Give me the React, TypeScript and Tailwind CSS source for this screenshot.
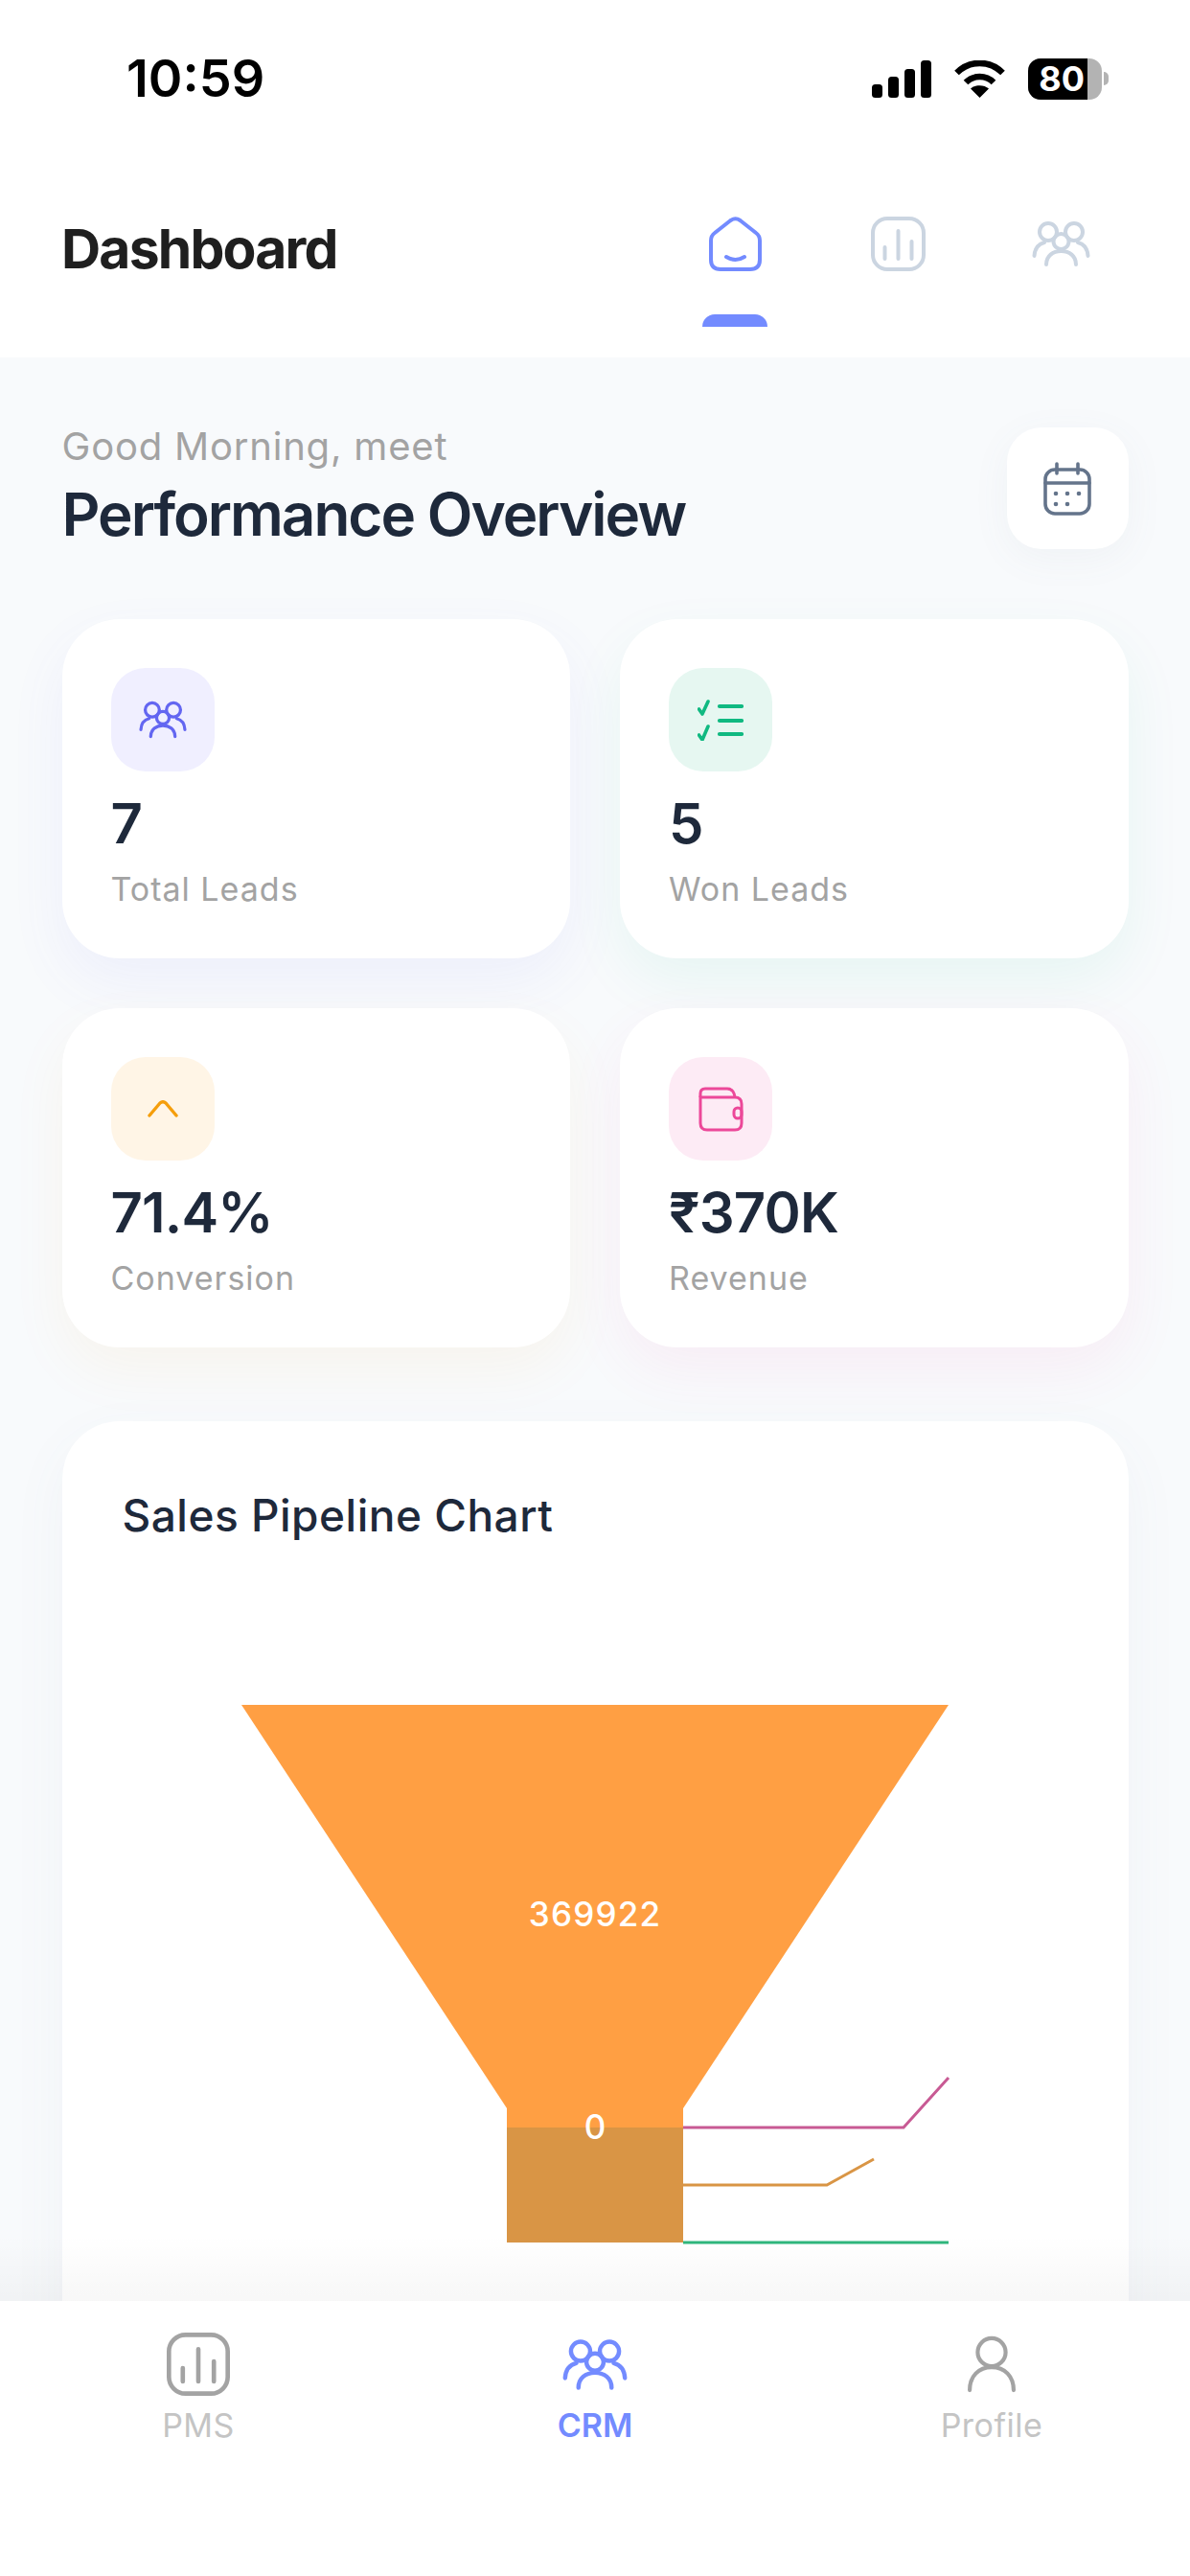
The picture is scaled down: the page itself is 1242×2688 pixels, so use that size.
import type { ReactNode } from "react"

const FONT = "font-['Inter','Noto_Sans',sans-serif]"

function PeopleIcon({ className }: { className?: string }) {
  return (
    <svg viewBox="0 0 61 47" fill="none" stroke="currentColor" strokeWidth="4" strokeLinecap="round" className={className}>
      <circle cx="17" cy="11" r="9" />
      <circle cx="44" cy="11" r="9" />
      <circle cx="30.5" cy="21" r="8" />
      <path d="M2.5 36C3 28 7 23.5 13 22" />
      <path d="M58.5 36C58 28 54 23.5 48 22" />
      <path d="M15 45C15 36 22 31 30.5 31C39 31 46 36 46 45" />
    </svg>
  )
}

function ChartIcon({ className }: { className?: string }) {
  return (
    <svg viewBox="0 0 57 57" fill="none" stroke="currentColor" strokeWidth="4" strokeLinecap="round" className={className}>
      <rect x="2" y="2" width="53" height="53" rx="15" />
      <path d="M14.5 32V44M28.5 15V44M42.5 26V44" />
    </svg>
  )
}

function HomeIcon({ className }: { className?: string }) {
  return (
    <svg viewBox="0 0 55 57" fill="none" stroke="currentColor" strokeWidth="4" strokeLinecap="round" strokeLinejoin="round" className={className}>
      <path d="M22.5 4L6 17Q2 20 2 25V45Q2 55 12 55H43Q53 55 53 45V25Q53 20 49 17L32.5 4Q27.5 0.5 22.5 4Z" />
      <path d="M18 42Q27.5 48 37 42" />
    </svg>
  )
}

function CalendarIcon({ className }: { className?: string }) {
  return (
    <svg viewBox="0 0 50 56" fill="none" stroke="currentColor" strokeWidth="3.6" strokeLinecap="round" className={className}>
      <rect x="2" y="8" width="46" height="46" rx="10" />
      <path d="M2 22H48M14 2V12M36 2V12" />
      <g fill="currentColor" stroke="none">
        <circle cx="13" cy="33" r="2.3" />
        <circle cx="25" cy="33" r="2.3" />
        <circle cx="37" cy="33" r="2.3" />
        <circle cx="13" cy="44" r="2.3" />
        <circle cx="25" cy="44" r="2.3" />
      </g>
    </svg>
  )
}

function ChecklistIcon({ className }: { className?: string }) {
  return (
    <svg viewBox="0 0 48 43" fill="none" stroke="currentColor" strokeLinecap="round" strokeLinejoin="round" className={className}>
      <path d="M1.5 10L5 15L11 2M1.5 37L5 42L11 28" strokeWidth="3.6" />
      <path d="M23 7H46M23 22H46M23 36H46" strokeWidth="4.2" />
    </svg>
  )
}

function WalletIcon({ className }: { className?: string }) {
  return (
    <svg viewBox="0 0 47 47" fill="none" stroke="currentColor" strokeWidth="3" className={className}>
      <path d="M2 11V38Q2 45 9 45H38Q45 45 45 38V18Q45 11 38 11H2Z" />
      <path d="M2 11V7Q2 2 7 2H30Q37 2 38 11" />
      <rect x="37" y="22" width="8" height="11" rx="4" />
    </svg>
  )
}

function ChevronIcon({ className }: { className?: string }) {
  return (
    <svg viewBox="0 0 32 18" fill="none" stroke="currentColor" strokeWidth="3.4" strokeLinecap="round" strokeLinejoin="round" className={className}>
      <path d="M2 16L13 3Q16 0.5 19 3L30 16" />
    </svg>
  )
}

function ProfileIcon({ className }: { className?: string }) {
  return (
    <svg viewBox="0 0 48 56" fill="none" stroke="currentColor" strokeWidth="4" strokeLinecap="round" className={className}>
      <circle cx="24" cy="16" r="14" />
      <path d="M2 54C2 40 11 31 24 31C37 31 46 40 46 54" />
    </svg>
  )
}

function StatusBar() {
  return (
    <div className="h-[164px] shrink-0 bg-white flex items-center justify-between pl-[132px] pr-[85px]">
      <span className="text-[54px] leading-none font-semibold text-black">10:59</span>
      <div className="flex items-center gap-[24px]">
        <svg viewBox="0 0 62 39" className="w-[62px] h-[39px]" fill="black">
          <rect x="0" y="25" width="11" height="14" rx="3.5" />
          <rect x="17" y="17" width="11" height="22" rx="3.5" />
          <rect x="34" y="9" width="11" height="30" rx="3.5" />
          <rect x="51" y="0" width="11" height="39" rx="3.5" />
        </svg>
        <svg viewBox="0 0 53 39" className="w-[53px] h-[39px]" fill="none" stroke="black" strokeWidth="6.5">
          <path d="M2.5 13C16 -0.5 37 -0.5 50.5 13" />
          <path d="M12 23C20 15 33 15 41 23" />
          <path d="M26.5 39L17 29.5C22 25 31 25 36 29.5Z" fill="black" stroke="none" />
        </svg>
        <div className="flex items-center">
          <div className="w-[77px] h-[43px] rounded-[13px] overflow-hidden flex bg-[#b3b3b3]">
            <div className="w-[62px] bg-black flex items-center justify-end pr-[3px] text-white text-[36px] font-bold leading-none">
              80
            </div>
          </div>
          <div className="w-[5px] h-[14px] ml-[2px] rounded-r-full bg-[#b3b3b3]" />
        </div>
      </div>
    </div>
  )
}

function HeaderTab({ active, children }: { active?: boolean; children: ReactNode }) {
  return (
    <div className="w-[170px] flex flex-col items-center">
      <div className="h-[57px] flex items-center justify-center">{children}</div>
      <div className={`mt-[45px] w-[68px] h-[13px] rounded-t-[14px] ${active ? "bg-[#738bff]" : "bg-transparent"}`} />
    </div>
  )
}

function Header() {
  return (
    <header className="h-[209px] shrink-0 bg-white flex justify-between pl-[64px] pr-[50px] pt-[64px]">
      <h1 className="text-[57px] leading-[64px] font-bold tracking-[-1.8px] text-[#1f1f1f]">Dashboard</h1>
      <div className="flex -mt-[2px]">
        <HeaderTab active>
          <HomeIcon className="w-[55px] h-[57px] text-[#738bff]" />
        </HeaderTab>
        <HeaderTab>
          <ChartIcon className="w-[57px] h-[57px] text-[#cbd5e1]" />
        </HeaderTab>
        <HeaderTab>
          <PeopleIcon className="w-[61px] h-[47px] text-[#cbd5e1]" />
        </HeaderTab>
      </div>
    </header>
  )
}

const stats = [
  {
    value: "7",
    label: "Total Leads",
    tile: "bg-[#f0efff]",
    shadow: "shadow-[0_24px_60px_rgba(99,102,241,0.07)]",
    icon: <PeopleIcon className="w-[50px] h-[40px] text-[#6366f1]" />,
  },
  {
    value: "5",
    label: "Won Leads",
    tile: "bg-[#e6f7f1]",
    shadow: "shadow-[0_24px_60px_rgba(16,185,129,0.07)]",
    icon: <ChecklistIcon className="w-[48px] h-[43px] text-[#10b981]" />,
  },
  {
    value: "71.4%",
    label: "Conversion",
    tile: "bg-[#fff5e6]",
    shadow: "shadow-[0_24px_60px_rgba(245,158,11,0.06)]",
    icon: <ChevronIcon className="w-[32px] h-[18px] text-[#f59e0b]" />,
  },
  {
    value: "₹370K",
    label: "Revenue",
    tile: "bg-[#fdebf5]",
    shadow: "shadow-[0_24px_60px_rgba(236,72,153,0.07)]",
    icon: <WalletIcon className="w-[47px] h-[47px] text-[#ec4899]" />,
  },
]

function StatCard({ stat }: { stat: (typeof stats)[number] }) {
  return (
    <div className={`h-[354px] rounded-[60px] bg-white pl-[51px] pt-[51px] ${stat.shadow}`}>
      <div className={`w-[108px] h-[108px] rounded-[36px] flex items-center justify-center ${stat.tile}`}>{stat.icon}</div>
      <div className="mt-[18px] text-[58px] leading-[72px] font-semibold tracking-[-0.8px] text-[#1e293b]">{stat.value}</div>
      <div className="mt-[11px] text-[34px] leading-[44px] tracking-[1px] text-[#a3a3a3]">{stat.label}</div>
    </div>
  )
}

function FunnelChart() {
  return (
    <svg viewBox="0 0 1113 900" className="w-full h-[900px] mt-[170px]">
      <path d="M187 0H925L648 421H464Z" fill="#ff9f43" />
      <rect x="464" y="421" width="184" height="20" fill="#ff9f43" />
      <rect x="464" y="441" width="184" height="120" fill="#d99545" />
      <path d="M648 441H878L925 389" fill="none" stroke="#c85a94" strokeWidth="3" />
      <path d="M648 501H798L847 474" fill="none" stroke="#d99545" strokeWidth="3" />
      <path d="M648 561H925" fill="none" stroke="#2fb67c" strokeWidth="3" />
      <text x="556" y="231" textAnchor="middle" fill="white" fontSize="35" fontWeight="500" letterSpacing="1.2">
        369922
      </text>
      <text x="556" y="453" textAnchor="middle" fill="white" fontSize="35" fontWeight="500">
        0
      </text>
    </svg>
  )
}

function BottomNav() {
  return (
    <nav className="h-[287px] shrink-0 bg-white grid grid-cols-3 pt-[33px]">
      <div className="flex flex-col items-center">
        <div className="h-[66px] flex items-center">
          <ChartIcon className="w-[66px] h-[66px] text-[#a3a3a3]" />
        </div>
        <span className="mt-[9px] text-[34px] leading-[44px] tracking-[0.5px] text-[#c4c4c4]">PMS</span>
      </div>
      <div className="flex flex-col items-center">
        <div className="h-[66px] flex items-center">
          <PeopleIcon className="w-[68px] h-[53px] text-[#738bff]" />
        </div>
        <span className="mt-[9px] text-[34px] leading-[44px] font-semibold text-[#738bff]">CRM</span>
      </div>
      <div className="flex flex-col items-center">
        <div className="h-[66px] flex items-center">
          <ProfileIcon className="w-[50px] h-[60px] text-[#a3a3a3]" />
        </div>
        <span className="mt-[9px] text-[34px] leading-[44px] tracking-[0.5px] text-[#c4c4c4]">Profile</span>
      </div>
    </nav>
  )
}

export default function App() {
  return (
    <div className={`${FONT} w-[1242px] h-[2688px] overflow-hidden flex flex-col bg-white`}>
      <StatusBar />
      <Header />
      <main className="relative flex-1 min-h-0 overflow-hidden bg-[#f8fafc] px-[64.5px] pt-[73px]">
        <div className="flex items-start justify-between">
          <div>
            <p className="text-[40px] leading-[46px] tracking-[0.8px] text-[#a3a3a3] -mt-[3px]">Good Morning, meet</p>
            <h2 className="text-[62px] leading-[72px] font-semibold tracking-[-2px] text-[#1e293b] mt-[12px]">Performance Overview</h2>
          </div>
          <button type="button" className="w-[127px] h-[127px] rounded-[36px] bg-white flex items-center justify-center shadow-[0_10px_40px_rgba(100,116,139,0.06)]">
            <CalendarIcon className="w-[50px] h-[56px] text-[#64748b]" />
          </button>
        </div>

        <div className="grid grid-cols-2 gap-[52px] mt-[73px]">
          {stats.map((stat) => (
            <StatCard key={stat.label} stat={stat} />
          ))}
        </div>

        <section className="mt-[77px] h-[1200px] rounded-[60px] bg-white shadow-[0_20px_60px_rgba(100,116,139,0.05)]">
          <h3 className="pl-[63px] pt-[70px] text-[46px] leading-[56px] font-medium tracking-[0.5px] text-[#1e293b]">Sales Pipeline Chart</h3>
          <FunnelChart />
        </section>

        <div className="absolute inset-x-0 bottom-0 h-[70px] bg-gradient-to-b from-transparent to-[#000000]/[0.03]" />
      </main>
      <BottomNav />
    </div>
  )
}
